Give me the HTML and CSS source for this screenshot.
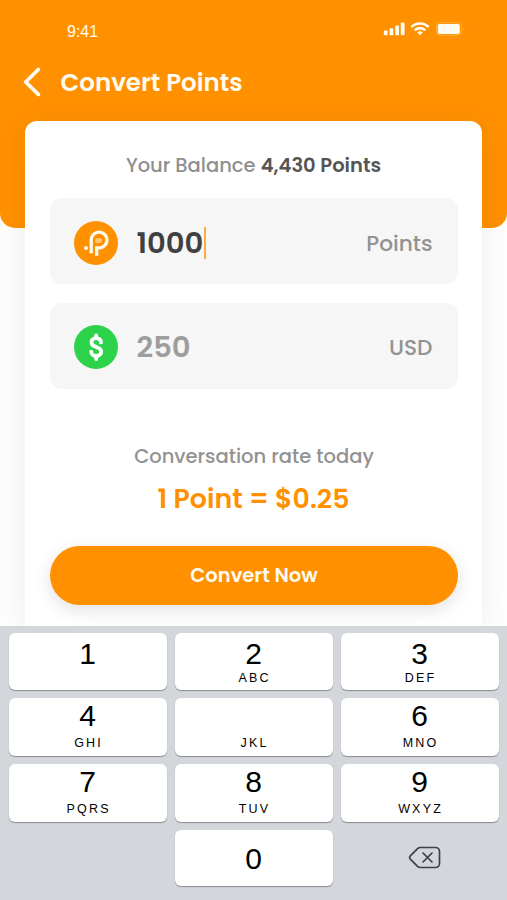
FILE: index.html
```html
<!DOCTYPE html>
<html lang="en">
<head>
<meta charset="utf-8">
<title>Convert Points</title>
<link rel="stylesheet" href="styles.css">
</head>
<body>
<div class="screen">
  <header class="header">
    <div class="status">
      <span class="time">9:41</span>
      <svg class="status-icons" width="84" height="18" viewBox="0 0 84 18" fill="#fffbf0">
        <rect x="0.8" y="10.5" width="3.8" height="4.8" rx="1"/>
        <rect x="6.5" y="8.3" width="3.8" height="7" rx="1"/>
        <rect x="12.2" y="5.5" width="3.8" height="9.8" rx="1"/>
        <rect x="17.8" y="2.6" width="3.8" height="12.7" rx="1"/>
        <g fill="none" stroke="#fffbf0" stroke-width="2.6">
          <path d="M28.4 7a12.2 12.2 0 0 1 17.2 0"/>
          <path d="M31.6 10.4a7.6 7.6 0 0 1 10.800 0"/>
        </g>
        <path d="M34.2 12.6a4.200 4.200 0 0 1 5.600 0l-2.800 2.700z"/>
        <rect x="53.500" y="2.700" width="25" height="12.500" rx="3" fill="none" stroke="#ffb13f" stroke-width="1"/>
        <rect x="54.800" y="4.100" width="22" height="9.800" rx="1.600"/>
        <path d="M80.200 7.200v3.600c1.600-.6 1.600-3 0-3.600z" fill="#ffb13f"/>
      </svg>
    </div>
    <div class="titlebar">
      <svg class="back" width="20" height="30" viewBox="0 0 20 30"><path d="M16.300 2.500 3.700 15l12.600 12.300" fill="none" stroke="#fffbf0" stroke-width="3.800" stroke-linecap="round" stroke-linejoin="round"/></svg>
      <h1 class="title">Convert Points</h1>
    </div>
  </header>

  <main class="card">
    <p class="balance"><span>Your Balance</span> <b>4,430 Points</b></p>
    <div class="field">
      <svg class="coin" width="44" height="44" viewBox="0 0 44 44">
        <circle cx="22" cy="22" r="22" fill="#ff9100"/>
        <path d="M17.200 32.200V19a7.900 7.900 0 1 1 7.900 7.900H22.700V34.800" fill="none" stroke="#fffbf0" stroke-width="3.300"/>
        <rect x="21" y="17.300" width="7" height="4.600" rx="2.200" fill="#ffc877"/>
        <circle cx="12" cy="27" r="2" fill="#fffbf0"/>
      </svg>
      <span class="amount">1000</span><i class="caret"></i>
      <span class="unit">Points</span>
    </div>
    <div class="field field-usd">
      <svg class="coin" width="44" height="44" viewBox="0 0 44 44">
        <circle cx="22" cy="22" r="22" fill="#2dd24b"/>
        <g fill="none" stroke="#fff" stroke-width="3.800" stroke-linecap="round" stroke-linejoin="round">
          <path d="M27 17.400c0-2.800-2.100-4.300-4.800-4.300s-4.700 1.600-4.700 4.300c0 5.800 9.700 3.400 9.700 9.200 0 2.900-2.200 4.400-5 4.400s-5-1.600-5-4.400"/>
          <path d="M22.200 10.400v2.500M22.200 31.500v2.600"/>
        </g>
      </svg>
      <span class="amount amount-muted">250</span>
      <span class="unit">USD</span>
    </div>
    <p class="rate-label">Conversation rate today</p>
    <p class="rate">1 Point = $0.25</p>
    <button class="cta">Convert Now</button>
  </main>

  <section class="keypad">
    <div class="key key-top"><b>1</b></div>
    <div class="key key-top"><b>2</b><small>ABC</small></div>
    <div class="key key-top"><b>3</b><small>DEF</small></div>
    <div class="key"><b>4</b><small>GHI</small></div>
    <div class="key"><b></b><small>JKL</small></div>
    <div class="key"><b>6</b><small>MNO</small></div>
    <div class="key"><b>7</b><small>PQRS</small></div>
    <div class="key"><b>8</b><small>TUV</small></div>
    <div class="key"><b>9</b><small>WXYZ</small></div>
    <div></div>
    <div class="key key-zero"><b>0</b></div>
    <div class="delete">
      <svg width="34" height="24" viewBox="0 0 34 24" fill="none" stroke="#3f4145" stroke-width="1.700" stroke-linecap="round" stroke-linejoin="round">
        <path d="M12.300 1.500H27.500a4 4 0 0 1 4 4v12a4 4 0 0 1-4 4H12.300a4 4 0 0 1-2.700-1.100L2.300 13.100a2.200 2.200 0 0 1 0-3.200l7.300-7.300a4 4 0 0 1 2.700-1.100z"/>
        <path d="M15 7l9 9M24 7l-9 9"/>
      </svg>
    </div>
  </section>
</div>
</body>
</html>
```
FILE: styles.css
```css
* { box-sizing: border-box; }
body { margin: 0; }
h1, p { margin: 0; }
.screen {
  width: 507px;
  height: 900px;
  overflow: hidden;
  display: flex;
  flex-direction: column;
  background: #fefefe;
  font-family: Poppins, Inter, sans-serif;
}
.header {
  flex: none;
  height: 228px;
  background: #ff9100;
  border-radius: 0 0 15px 15px;
  color: #fffbf0;
}
.status {
  height: 60px;
  padding: 20px 40px 0 67px;
  display: flex;
  justify-content: space-between;
}
.time { font: 16px/24px "Liberation Sans", sans-serif; }
.titlebar {
  display: flex;
  align-items: center;
  gap: 19px;
  height: 44px;
  padding-left: 21.5px;
}
.title { padding-top: 2px; font-size: 24.5px; font-weight: 600; line-height: 44px; white-space: nowrap; }
.card {
  flex: none;
  width: 457px;
  height: 505px;
  margin: -107px auto 0 25px;
  padding: 31px 24px 0 25px;
  background: #fff;
  border-radius: 12px 12px 0 0;
  box-shadow: 0 4px 34px rgba(0, 0, 0, .07);
}
.balance { height: 46px; padding-right: 1px; font-size: 19.5px; line-height: 27px; color: #8f8f8f; font-weight: 500; text-align: center; white-space: nowrap; }
.balance b { color: #555; font-weight: 600; }
.field {
  display: flex;
  align-items: center;
  height: 86px;
  margin-bottom: 19px;
  padding: 3px 25.5px 0 24px;
  background: #f6f6f6;
  border-radius: 12px;
}
.field-usd { padding-top: 1px; }
.amount { margin-left: 18.5px; padding-top: 2px; font-size: 29px; font-weight: 600; color: #404040; }
.amount-muted { color: #9d9d9d; }
.caret { width: 2px; height: 32px; margin-left: 1px; background: #ffab40; }
.unit { margin-left: auto; padding-top: 2px; font-size: 21.7px; font-weight: 500; color: #929292; }
.rate-label { margin-top: 54px; font-size: 19.5px; line-height: 28px; font-weight: 500; color: #929292; text-align: center; white-space: nowrap; }
.rate { margin-top: 8px; height: 67px; padding-right: 1px; font-size: 26.8px; line-height: 39px; font-weight: 600; color: #ff9100; text-align: center; white-space: nowrap; }
.cta {
  display: block;
  width: 100%;
  height: 59px;
  padding: 0;
  border: 0;
  border-radius: 30px;
  background: #ff9100;
  color: #fffbf0;
  font: 600 19.5px/59px Poppins, Inter, sans-serif;
  box-shadow: 0 5px 18px rgba(0, 0, 0, .12);
}
.keypad {
  flex: none;
  height: 274px;
  padding: 7px 8px 0 9px;
  display: grid;
  grid-template-columns: repeat(3, 158px);
  grid-template-rows: 57px 58px 58px 56px;
  column-gap: 8px;
  row-gap: 8px;
  background: #d3d6db;
  font-family: "Liberation Sans", sans-serif;
}
.key {
  display: flex;
  flex-direction: column;
  align-items: center;
  padding: 2px 1px 0 0;
  border-radius: 6px;
  background: #fff;
  box-shadow: 0 1px 1px #898b8f;
  color: #000;
}
.key b { height: 35px; font-weight: 400; font-size: 30px; line-height: 31px; }
.key small { font-size: 12.5px; line-height: 16px; letter-spacing: 2.2px; margin-right: -2.2px; }
.key-top { padding-top: 5px; }
.key-top b { height: 32px; }
.key-zero { padding-top: 13px; }
.delete { display: flex; justify-content: center; align-items: center; padding: 0 0 1px 9px; }
```
